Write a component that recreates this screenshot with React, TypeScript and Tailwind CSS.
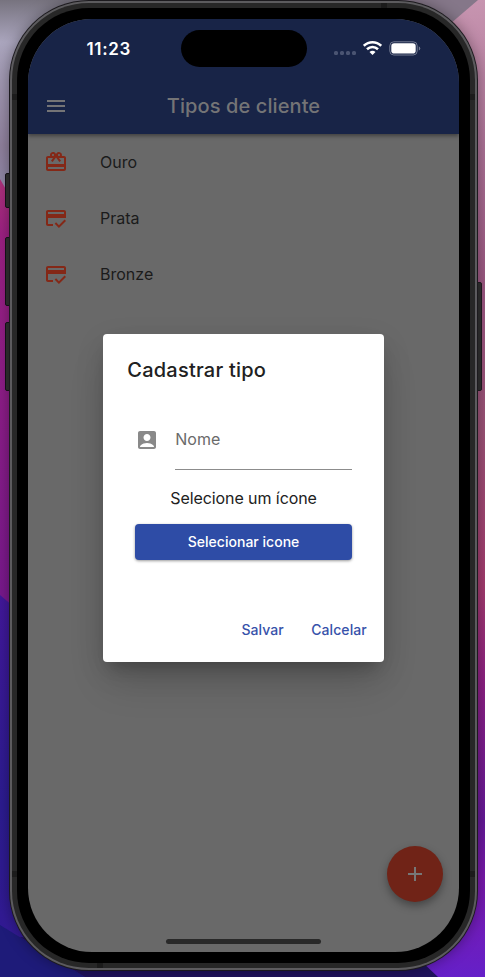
import { MdAccountBox, MdAdd, MdMenu, MdOutlineCreditScore, MdRedeem } from "react-icons/md";

const clientTypes = [
  { name: "Ouro", Icon: MdRedeem },
  { name: "Prata", Icon: MdOutlineCreditScore },
  { name: "Bronze", Icon: MdOutlineCreditScore },
];

function Wallpaper() {
  return (
    <svg className="absolute inset-0" width="485" height="977" viewBox="0 0 485 977" aria-hidden="true">
      <defs>
        <linearGradient id="leftTop" gradientUnits="userSpaceOnUse" x1="0" y1="0" x2="0" y2="210">
          <stop offset="0" stopColor="#77737f" />
          <stop offset="0.2" stopColor="#aaa5bd" />
          <stop offset="0.7" stopColor="#8f809c" />
          <stop offset="1" stopColor="#8d8aac" />
        </linearGradient>
        <linearGradient id="magenta" x1="0" y1="0" x2="0" y2="1">
          <stop offset="0" stopColor="#ac327a" />
          <stop offset="0.12" stopColor="#9c2183" />
          <stop offset="1" stopColor="#74188d" />
        </linearGradient>
        <linearGradient id="indigo" x1="0" y1="0" x2="0" y2="1">
          <stop offset="0" stopColor="#42189b" />
          <stop offset="0.55" stopColor="#2c1c91" />
          <stop offset="1" stopColor="#341994" />
        </linearGradient>
        <linearGradient id="rightSide" x1="0" y1="0" x2="0" y2="1">
          <stop offset="0" stopColor="#c795b0" />
          <stop offset="0.15" stopColor="#ac7296" />
          <stop offset="0.3" stopColor="#9a5680" />
          <stop offset="0.44" stopColor="#9b5276" />
          <stop offset="0.6" stopColor="#a33b6e" />
          <stop offset="0.7" stopColor="#8c2083" />
          <stop offset="0.84" stopColor="#651998" />
          <stop offset="0.9" stopColor="#7919ac" />
          <stop offset="1" stopColor="#6520c8" />
        </linearGradient>
      </defs>
      <rect width="243" height="240" fill="url(#leftTop)" />
      <path d="M0 179 L15 205 H60 V640 H0Z" fill="url(#magenta)" />
      <path d="M0 595 L20 612 H243 V977 H0Z" fill="url(#indigo)" />
      <path d="M0 925 L85 977 H0Z" fill="#1e1b79" />
      <path d="M20 937 L85 977 H243 V960Z" fill="#20135d" />
      <rect x="243" width="242" height="977" fill="url(#rightSide)" />
      <path d="M243 0 H478 L450 24Z" fill="#857789" />
      <path d="M243 960 H420 L438 977 H243Z" fill="#20135d" />
    </svg>
  );
}

function StatusBar() {
  return (
    <div className="flex h-[59px] items-center pl-[58.5px]">
      <span className="w-[94px] pt-[1px] text-[17px] font-semibold leading-none tracking-[0.65px] text-white">11:23</span>
      <div className="h-[37px] w-[126px] rounded-full bg-black" />
      <div className="ml-[27px] mt-[9px] flex gap-[2px]">
        <i className="size-1 rounded-[1.5px] bg-[#4a5472]" />
        <i className="size-1 rounded-[1.5px] bg-[#4a5472]" />
        <i className="size-1 rounded-[1.5px] bg-[#4a5472]" />
        <i className="size-1 rounded-[1.5px] bg-[#4a5472]" />
      </div>
      <svg className="-mt-[1px] ml-[7.5px]" width="19" height="14" viewBox="0 0 19 14" fill="none" stroke="#fff" strokeWidth="2.6">
        <path d="M.8 4.9C5.8.1 13.2.1 18.2 4.9" />
        <path d="M4 8.2C7.2 5.2 11.8 5.2 15 8.2" />
        <path d="M6.5 11C8.2 9.3 10.8 9.3 12.5 11L9.5 14Z" fill="#fff" stroke="none" />
      </svg>
      <svg className="-mt-[1px] ml-[7px]" width="32" height="15" viewBox="0 0 32 15">
        <rect x=".8" y=".8" width="27.4" height="13.2" rx="4" fill="none" stroke="#737b92" />
        <rect x="2.3" y="2.3" width="24.4" height="10.2" rx="2.8" fill="#fff" />
        <path d="M29.8 5.3Q31.3 6 31.3 7.4T29.8 9.5Z" fill="#737b92" />
      </svg>
    </div>
  );
}

function TypeDialog() {
  return (
    <section className="absolute left-[75.3px] top-[315px] flex h-[328px] w-[280.5px] flex-col rounded-[4px] bg-white text-[#212121] shadow-[0_11px_15px_-7px_rgba(0,0,0,0.2),0_24px_38px_-6px_rgba(0,0,0,0.16),0_9px_30px_0px_rgba(0,0,0,0.1)]">
      <h2 className="pl-6 pt-6 text-[20px] font-medium leading-6 tracking-[0.22px]">Cadastrar tipo</h2>
      <div className="mt-[33px] flex h-[55px] px-8">
        <MdAccountBox className="mt-[12.5px] size-6 text-[#898989]" />
        <div className="ml-4 flex-1 border-b border-[#8c8c8c] pt-3 text-[16px] leading-6 text-[#6a6a6a]">Nome</div>
      </div>
      <p className="mt-[16px] text-center text-[16px] leading-6 tracking-[-0.08px]">Selecione um ícone</p>
      <button className="mx-8 mt-[14px] h-9 shrink-0 rounded-[4px] bg-[#2e4ca6] pb-[2px] text-[14px] font-medium tracking-[0.02px] text-white shadow-[0_1px_3px_rgba(0,0,0,0.4)]">Selecionar icone</button>
      <div className="mt-[51px] flex h-9 items-center justify-end gap-[27.5px] pr-[17px] text-[14px] font-medium text-[#3752aa]">
        <button className="tracking-[0.04px]">Salvar</button>
        <button className="tracking-[0.08px]">Calcelar</button>
      </div>
    </section>
  );
}

export default function App() {
  return (
    <main className="relative h-[977px] w-[485px] overflow-hidden font-['Inter',sans-serif]">
      <Wallpaper />
      <i className="absolute left-[5px] top-[173px] h-[35px] w-2 rounded-l-[2px] border border-[#16121a] bg-[#303030]" />
      <i className="absolute left-[5px] top-[237px] h-[69px] w-2 rounded-l-[2px] border border-[#16121a] bg-[#303030]" />
      <i className="absolute left-[5px] top-[322px] h-[69px] w-2 rounded-l-[2px] border border-[#16121a] bg-[#303030]" />
      <i className="absolute left-[475px] top-[282px] h-[109px] w-[7px] rounded-r-[2px] border border-[#221c22] bg-[#303030]" />
      <div className="relative ml-[9px] h-[971px] w-[469px] rounded-[80px] bg-[#1c1a1e] p-px shadow-[0_0_14px_rgba(0,0,0,0.35)]">
        <div className="h-full rounded-[79px] bg-[#5c5b5e] p-[2px]">
          <div className="relative h-full rounded-[77px] bg-[#272727] p-[5px]">
            <i className="absolute left-0 top-[91px] h-[6px] w-[5px] bg-[#1b1b1b]" />
            <i className="absolute right-0 top-[91px] h-[6px] w-[5px] bg-[#1b1b1b]" />
            <i className="absolute left-0 top-[868px] h-[6px] w-[5px] bg-[#1b1b1b]" />
            <i className="absolute right-0 top-[868px] h-[6px] w-[5px] bg-[#1b1b1b]" />
            <i className="absolute left-[369px] top-0 h-[5px] w-[6px] bg-[#1b1b1b]" />
            <i className="absolute bottom-0 left-[85px] h-[5px] w-[6px] bg-[#1b1b1b]" />
            <div className="h-full rounded-[72px] bg-black p-[11px]">
              <div className="relative flex h-[933px] w-[431px] flex-col overflow-hidden rounded-[64px] bg-[#696969]">
                <header className="h-[115px] shrink-0 bg-[#182447] shadow-[0_2px_4px_rgba(0,0,0,0.4)]">
                  <StatusBar />
                  <div className="grid h-14 grid-cols-[56px_1fr_56px] items-center text-[#747476]">
                    <MdMenu className="ml-4 size-6" />
                    <h1 className="text-center text-[20px] font-medium leading-6 tracking-[0.1px]">Tipos de cliente</h1>
                  </div>
                </header>
                <ul>
                  {clientTypes.map(({ name, Icon }) => (
                    <li key={name} className="flex h-14 items-center pl-4">
                      <Icon className="size-6 text-[#842817]" />
                      <span className="ml-8 text-[16px] leading-6 text-[#1b1b1b]">{name}</span>
                    </li>
                  ))}
                </ul>
                <button className="absolute left-[359px] top-[827px] flex size-14 items-center justify-center rounded-full bg-[#702317] text-[#777] shadow-[0_4px_8px_rgba(0,0,0,0.35)]">
                  <MdAdd className="size-6" />
                </button>
                <TypeDialog />
                <div className="mx-auto mb-2 mt-auto h-[5px] w-[155px] rounded-full bg-[#292929]" />
              </div>
            </div>
          </div>
        </div>
      </div>
    </main>
  );
}
